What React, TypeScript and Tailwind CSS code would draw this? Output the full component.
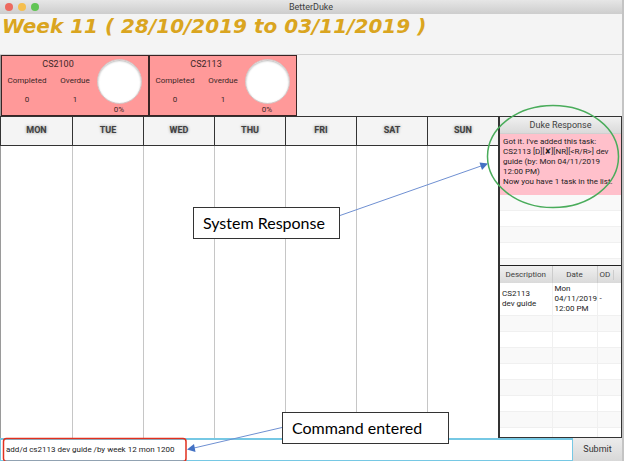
import { useState } from "react";

const days = ["MON", "TUE", "WED", "THU", "FRI", "SAT", "SUN"];

const modules = [
  { code: "CS2100", completed: 0, overdue: 1, progress: "0%" },
  { code: "CS2113", completed: 0, overdue: 1, progress: "0%" },
];

const emptyRows = [0, 1, 2, 3, 4, 5, 6, 7];

function TitleBar() {
  return (
    <header className="relative flex h-[14px] shrink-0 items-center justify-center bg-linear-to-b from-[#e6e6e6] to-[#cdcdcd]">
      <div className="absolute left-[5px] flex gap-[5px]">
        <span className="size-[8px] rounded-full bg-[#ed6a5f]" />
        <span className="size-[8px] rounded-full bg-[#f5bf4f]" />
        <span className="size-[8px] rounded-full bg-[#61c554]" />
      </div>
      <span className="text-[9px] leading-[14px] text-[#404040]">BetterDuke</span>
    </header>
  );
}

function ModuleCard({ code, completed, overdue, progress }: (typeof modules)[number]) {
  return (
    <article className="flex w-[148px] border border-[#3a2424] bg-[#ff9999] text-[8px] text-[#3b2727]">
      <div className="flex w-[94px] flex-col">
        <h2 className="ml-[18px] mt-[2px] text-center text-[9px] leading-[12px]">{code}</h2>
        <dl className="mt-[6px] grid grid-cols-2 pl-[2px] text-center leading-[10px]">
          <div>
            <dt>Completed</dt>
            <dd className="mt-[9px]">{completed}</dd>
          </div>
          <div>
            <dt className="ml-[4px]">Overdue</dt>
            <dd className="ml-[4px] mt-[9px]">{overdue}</dd>
          </div>
        </dl>
      </div>
      <div className="flex w-[46px] flex-col items-center pt-[3px]">
        <span className="size-[45px] shrink-0 rounded-full border border-[#d5c5c5] bg-white shadow-[inset_0_1px_2px_#bbbbbb]" />
        <span className="text-[8px] leading-[12px]">{progress}</span>
      </div>
    </article>
  );
}

function Calendar() {
  return (
    <main className="grid min-w-0 flex-1 grid-cols-7 border-l border-[#9a9a9a]">
      {days.map((day) => (
        <section key={day} className="flex flex-col border-l border-[#c6c6c6] first:border-l-0">
          <h3 className="-ml-px flex h-[30px] items-center justify-center border-y border-l border-[#333333] bg-[#f4f4f4] text-[9px] font-bold text-[#404040] [text-shadow:0_0_3px_#888888]">
            {day}
          </h3>
        </section>
      ))}
    </main>
  );
}

function DukeResponse() {
  return (
    <section className="flex h-[149px] flex-col overflow-hidden border-b border-[#222222]">
      <h3 className="h-[17px] shrink-0 border-b border-[#d0d0d0] bg-linear-to-b from-[#f0f0f0] to-[#dadada] text-center text-[9px] leading-[17px] text-[#404040]">
        Duke Response
      </h3>
      <p className="h-[61px] shrink-0 whitespace-nowrap bg-[#ffc0cb] px-[3px] pt-[3px] text-[8px] leading-[10px] text-[#1c1c1c]">
        Got it. I've added this task:
        <br />
        CS2113 [D][✘][NR][&lt;R/R&gt;] dev
        <br />
        guide (by: Mon 04/11/2019
        <br />
        12:00 PM)
        <br />
        Now you have 1 task in the list.
      </p>
      {[0, 1, 2, 3, 4].map((row) => (
        <div key={row} className="h-[16px] shrink-0 border-b border-[#f0f0f0] odd:bg-[#f9f9f9] even:bg-white" />
      ))}
    </section>
  );
}

function TaskTable() {
  return (
    <div className="h-[171px] overflow-hidden">
      <table className="w-full table-fixed border-collapse text-left text-[8px] leading-[10px] text-[#1c1c1c]">
        <colgroup>
          <col className="w-[52px]" />
          <col className="w-[45px]" />
          <col />
        </colgroup>
        <thead>
          <tr className="h-[17px] bg-linear-to-b from-[#f0f0f0] to-[#dadada] text-[#404040]">
            <th className="border-r border-[#cccccc] text-center font-normal">Description</th>
            <th className="border-r border-[#cccccc] text-center font-normal">Date</th>
            <th className="pl-[2px] font-normal">
              <span className="inline-block w-[14px] border-r border-[#cccccc]">OD</span>
            </th>
          </tr>
        </thead>
        <tbody>
          <tr className="h-[32px] bg-white">
            <td className="border-r border-[#f0f0f0] pl-[2px]">
              CS2113
              <br />
              dev guide
            </td>
            <td className="whitespace-nowrap border-r border-[#f0f0f0] pl-[2px]">
              Mon
              <br />
              04/11/2019
              <br />
              12:00 PM
            </td>
            <td className="pl-[2px]">-</td>
          </tr>
          {emptyRows.map((row) => (
            <tr key={row} className="h-[16px] border-t border-[#f0f0f0] odd:bg-white even:bg-[#f9f9f9]">
              <td className="border-r border-[#f0f0f0]" />
              <td className="border-r border-[#f0f0f0]" />
              <td />
            </tr>
          ))}
        </tbody>
      </table>
    </div>
  );
}

function Annotations() {
  return (
    <div className="pointer-events-none absolute inset-0">
      <svg className="absolute left-0 top-0" width="624" height="461" fill="none">
        <ellipse cx="553" cy="156.500" rx="65.500" ry="51" stroke="#4aac5b" strokeWidth="1.500" />
        <path d="M340 215.500 L481 166" stroke="#6f90d2" strokeWidth="1" />
        <path d="M488 163.500 L479.500 162.500 L482 170 Z" fill="#4472c4" />
        <path d="M282 427.500 L194 448" stroke="#6f90d2" strokeWidth="1" />
        <path d="M187 449.500 L194 444 L195.500 452 Z" fill="#4472c4" />
        <rect x="3.500" y="438.500" width="182.500" height="23" rx="3" stroke="#e1301e" strokeWidth="1.500" />
      </svg>
      <p className="absolute left-[193px] top-[207px] h-[32px] w-[147px] border border-[#333333] bg-white pl-[9px] font-[Lato,sans-serif] text-[16px] leading-[30px] text-black">
        System Response
      </p>
      <p className="absolute left-[282px] top-[412px] h-[32px] w-[167px] border border-[#333333] bg-white pl-[9px] font-[Lato,sans-serif] text-[16px] leading-[30px] text-black">
        Command entered
      </p>
    </div>
  );
}

export default function App() {
  const [command, setCommand] = useState("add/d cs2113 dev guide /by week 12 mon 1200");

  return (
    <div className="relative flex min-h-screen flex-col overflow-hidden border-r-2 border-[#c4c4c4] bg-[#f4f4f4] font-[Roboto,'DejaVu_Sans',sans-serif]">
      <TitleBar />
      <h1 className="h-[41px] shrink-0 whitespace-nowrap border-b border-[#d2d2d2] pl-[2px] font-['DejaVu_Sans',sans-serif] text-[20px] font-bold italic leading-[24px] text-[#daa520]">
        Week 11 ( 28/10/2019 to 03/11/2019 )
      </h1>
      <div className="flex h-[61px] shrink-0 border-l border-[#9a9a9a]">
        {modules.map((module) => (
          <ModuleCard key={module.code} {...module} />
        ))}
      </div>
      <div className="flex flex-1 bg-white">
        <Calendar />
        <aside className="w-[124px] shrink-0 border border-l-2 border-[#333333] bg-white">
          <DukeResponse />
          <TaskTable />
        </aside>
      </div>
      <form className="flex h-[23px] shrink-0" onSubmit={(event) => event.preventDefault()}>
        <input
          aria-label="Command"
          className="min-w-0 flex-1 border border-t-2 border-[#76c8e4] bg-white px-[5px] text-[8px] text-[#222222] outline-none"
          value={command}
          onChange={(event) => setCommand(event.target.value)}
        />
        <button type="submit" className="w-[49px] bg-linear-to-b from-[#ececec] to-[#d8d8d8] text-[9px] text-[#333333]">
          Submit
        </button>
      </form>
      <Annotations />
    </div>
  );
}
